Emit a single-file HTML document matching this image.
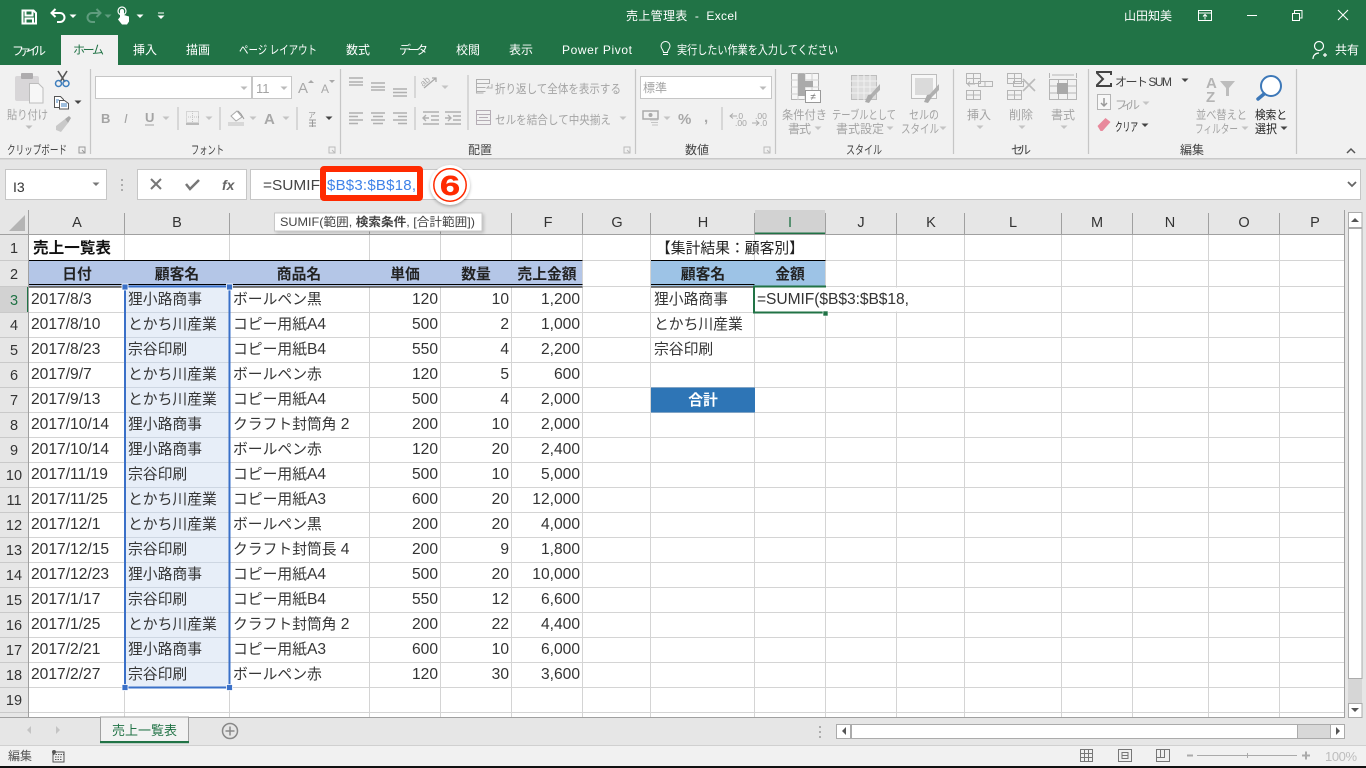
<!DOCTYPE html>
<html lang="ja"><head><meta charset="utf-8"><title>売上管理表 - Excel</title>
<style>
html,body{margin:0;padding:0;width:1366px;height:768px;overflow:hidden;background:#fff}
svg{display:block;position:absolute;left:0;top:0}
text{font-family:"Liberation Sans","Noto Sans CJK JP",sans-serif;white-space:pre}
.t{fill:#fff;font-size:12px}
.g{fill:#a4a4a4;font-size:12px}
.k{fill:#444;font-size:12px}
.c{fill:#363636;font-size:14.8px}
.n{fill:#333;font-size:15.6px}
.e{text-anchor:end}
.m{text-anchor:middle}
.b{font-weight:bold;font-size:14.8px;fill:#222;text-anchor:middle}
.h{fill:#333;font-size:14.5px;text-anchor:middle}
.ln{stroke:#b4b4b4;fill:none;stroke-width:1}
.lg{stroke:#b0b0b0;fill:none;stroke-width:1.4}
.sep{stroke:#c6c6c6;stroke-width:1.2}
</style></head><body>
<svg width="1366" height="768" viewBox="0 0 1366 768">
<defs>
<path id="ar" d="M-3.5 -1.5h7l-3.5 3.5z"/>
<filter id="sh" x="-30%" y="-30%" width="160%" height="160%"><feGaussianBlur stdDeviation="1.5"/></filter>
</defs>
<!-- title bar -->
<rect width="1366" height="65" fill="#217346"/>
<rect x="61" y="35" width="57" height="30" fill="#f1f1f1"/>
<!-- QAT -->
<path d="M22.5 10.5h11l2.5 2.5v10.5h-13.500zM25.500 11v4.500h7v-4.500M25.500 23.500v-5h7.500v5" fill="none" stroke="#fff" stroke-width="2"/>
<path d="M52 13h8a4.500 4.500 0 0 1 0 9h-3M55.500 9l-4 4 4 4" fill="none" stroke="#fff" stroke-width="2"/>
<use href="#ar" x="73" y="16" fill="#fff"/>
<path d="M100 13h-8a4.500 4.500 0 0 0 0 9h3M96.500 9l4 4-4 4" fill="none" stroke="#5f9c7e" stroke-width="2"/>
<use href="#ar" x="108" y="16" fill="#5f9c7e"/>
<path d="M120 17v-6a2 2 0 0 1 4 0v4l5 1.500v5l-2 3h-5l-4-5z" fill="#fff"/><circle cx="122" cy="11" r="4" fill="none" stroke="#fff" stroke-width="1.200"/>
<use href="#ar" x="140" y="16" fill="#fff"/>
<path d="M158 13h6" stroke="#fff"/><use href="#ar" x="161" y="17" fill="#fff"/>
<text class="t" x="626" y="20" font-size="12" textLength="111">売上管理表  -  Excel</text>
<text class="t" x="1124" y="20" textLength="48">山田知美</text>
<path d="M1198.500 10.500h13v10h-13zM1198.500 13h13M1205 19.500v-5M1203 16.500l2-2 2 2" fill="none" stroke="#fff"/>
<path d="M1247 15.500h10" stroke="#fff"/>
<path d="M1292.500 13.500h7v7h-7zM1294.500 13v-2.500h7.500v7.500h-2.500" fill="none" stroke="#fff"/>
<path d="M1338 10l10 10M1348 10l-10 10" stroke="#fff" stroke-width="1.100"/>
<!-- tabs -->
<text class="t" x="12" y="55" textLength="34">ファイル</text>
<text x="73" y="54" font-size="12" fill="#217346" textLength="31">ホーム</text>
<text class="t" x="133" y="54" textLength="24">挿入</text>
<text class="t" x="186" y="54" textLength="24">描画</text>
<text class="t" x="239" y="54" textLength="78" lengthAdjust="spacingAndGlyphs">ページ レイアウト</text>
<text class="t" x="346" y="54" textLength="24">数式</text>
<text class="t" x="399" y="54" textLength="29">データ</text>
<text class="t" x="456" y="54" textLength="24">校閲</text>
<text class="t" x="509" y="54" textLength="24">表示</text>
<text class="t" x="562" y="54" textLength="70">Power Pivot</text>
<path d="M663 54.500h5M663.500 52.500c0-3-2.500-3.500-2.500-6.500a4.500 4.500 0 0 1 9 0c0 3-2.500 3.500-2.500 6.500z" fill="none" stroke="#fff"/>
<text class="t" x="677" y="54" textLength="161" lengthAdjust="spacingAndGlyphs">実行したい作業を入力してください</text>
<circle cx="1319" cy="46" r="4.500" fill="none" stroke="#fff" stroke-width="1.200"/><path d="M1313 57c0-4 3-6 6-6M1323 53h4M1325 55v-4" transform="translate(0,2)" fill="none" stroke="#fff" stroke-width="1.200"/>
<text class="t" x="1335" y="54" textLength="24">共有</text>
<!-- ribbon -->
<rect y="65" width="1366" height="94" fill="#f1f1f1"/>
<rect y="158" width="1366" height="1.500" fill="#c9c9c9"/>
<g class="sep"><path d="M90.500 69v85M340.500 69v85M635.500 69v85M775.500 69v85M953.500 69v85M1088.500 69v85M1296.500 69v85"/><path d="M178 107v23M220 107v23M297 107v23M415 76v22M415 107v23M468 75v55M722 107v23"/></g>
<!-- clipboard -->
<rect x="15" y="76" width="24" height="25" rx="2" fill="#d8d6d8"/><rect x="21" y="73" width="12" height="6" rx="1" fill="#aeacae"/>
<path d="M29.500 83.500h9l4.500 4.500v15h-13.500z" fill="#f7f7f7" stroke="#bdbdbd"/>
<text class="g" x="7" y="119" font-size="13" textLength="41" lengthAdjust="spacingAndGlyphs">貼り付け</text>
<use href="#ar" x="29" y="127" fill="#bdbdbd"/>
<path d="M58 71l7 11M67 71l-7 11" stroke="#555" stroke-width="1.600"/><circle cx="58.500" cy="83.500" r="3" fill="none" stroke="#3f7fbd" stroke-width="1.500"/><circle cx="66" cy="83.500" r="3" fill="none" stroke="#3f7fbd" stroke-width="1.500"/>
<path d="M54.500 96.500h6l3 3v8h-9z" fill="#fff" stroke="#555"/><path d="M59.500 100.500h5l4 3v5.500h-9z" fill="#fff" stroke="#555"/><path d="M61 104h6M61 106h6" stroke="#3f7fbd"/><path d="M56 100h3M56 102h2" stroke="#3f7fbd"/>
<use href="#ar" x="78" y="102" fill="#444"/>
<path d="M56 126l9-7 3 4-7 9-5-2z" fill="#c9c9c9"/><path d="M65 119l4-3 2 2-3 5z" fill="#a9a9a9"/>
<text class="g" x="7" y="154" textLength="60" lengthAdjust="spacingAndGlyphs" style="fill:#444">クリップボード</text>
<path d="M79 147h6v6h-6zM82 150l3 3" fill="none" stroke="#999"/>
<!-- font -->
<rect x="95.500" y="76.500" width="156" height="22" fill="#fff" stroke="#c6c6c6"/><rect x="252.500" y="76.500" width="39" height="22" fill="#fff" stroke="#c6c6c6"/>
<use href="#ar" x="244" y="88" fill="#bbb"/><use href="#ar" x="284" y="88" fill="#bbb"/>
<text x="256" y="93" font-size="13" fill="#a4a4a4">11</text>
<text x="298" y="93" font-size="15" fill="#a8a8a8">A</text><path d="M308 83h6l-3-3z" fill="#a8a8a8"/>
<text x="321" y="93" font-size="12" fill="#a8a8a8">A</text><path d="M329 80h6l-3 3z" fill="#a8a8a8"/>
<text x="101" y="123" font-size="13" font-weight="bold" fill="#a4a4a4">B</text>
<text x="124" y="123" font-size="13" font-style="italic" font-family="Liberation Serif" fill="#a4a4a4">I</text>
<text x="145" y="122" font-size="13" font-weight="bold" fill="#a4a4a4">U</text><path d="M145 125h9" stroke="#a4a4a4"/>
<use href="#ar" x="166" y="118" fill="#c4c4c4"/>
<rect x="186.500" y="111.500" width="12" height="11" fill="none" stroke="#b9b9b9" stroke-dasharray="1 1"/><path d="M186 124h13" stroke="#a8a8a8" stroke-width="1.500"/><path d="M192.500 111v12M186 117h13" stroke="#c4c4c4" stroke-dasharray="1 1"/>
<use href="#ar" x="209" y="118" fill="#c4c4c4"/>
<path d="M231 116l6-5 5 6-6 4z" fill="#fff" stroke="#aaa"/><path d="M238 111l3 3 3 5" fill="none" stroke="#999"/><rect x="228" y="122" width="16" height="4" fill="#d8d8d8"/>
<use href="#ar" x="253" y="118" fill="#c4c4c4"/>
<text x="264" y="124" font-size="15" font-weight="bold" fill="#a8a8a8">A</text><use href="#ar" x="286" y="118" fill="#c4c4c4"/>
<text x="308" y="118" font-size="8" fill="#999">ア</text><path d="M309 120h7M309 123h7M309 126h7M312.500 120v7" stroke="#999"/>
<use href="#ar" x="329" y="118" fill="#444"/>
<text class="k" x="191" y="154" textLength="33" lengthAdjust="spacingAndGlyphs">フォント</text>
<path d="M329 147h6v6h-6zM332 150l3 3" fill="none" stroke="#bbb"/>
<!-- align -->
<g class="lg"><path d="M349 79h14M349 83h14M349 86h14" transform="translate(0,-1)"/><path d="M371 83h14M371 87h14M371 90h14" /><path d="M393 89h14M393 92.500h14M393 96h14"/>
<path d="M349 113h14M349 116.500h9M349 120h14M349 123.500h9"/><path d="M371 113h14M373 116.500h10M371 120h14M373 123.500h10"/><path d="M393 113h14M398 116.500h9M393 120h14M398 123.500h9"/>
<path d="M423 112h16M431 116h8M431 120h8M423 124h16M429 118h-6M426 115l-3 3 3 3"/><path d="M445 112h16M453 116h8M453 120h8M445 124h16M445 118h6M448 115l3 3-3 3"/></g>
<path d="M424 88l12-10M432 78h4v4" fill="none" stroke="#aaa" stroke-width="1.300"/><text x="423" y="87" font-size="9" fill="#aaa" transform="rotate(-40 423 87)">ab</text>
<use href="#ar" x="445" y="87" fill="#c4c4c4"/>
<path d="M476.500 79.500h13v4h-13zM476.500 87.500h9M476.500 91.500h9M476.500 79v14h7M492 84v4h-5l2-2" fill="none" stroke="#b0b0b0"/>
<text class="g" x="495" y="93" textLength="126" lengthAdjust="spacingAndGlyphs">折り返して全体を表示する</text>
<path d="M476.500 110.500h14v14h-14zM476.500 114.500h14M476.500 120.500h14M479 117.500h9" fill="none" stroke="#b5adb5"/>
<text class="g" x="495" y="124" textLength="116" lengthAdjust="spacingAndGlyphs">セルを結合して中央揃え</text>
<use href="#ar" x="623" y="118" fill="#c4c4c4"/>
<text class="k" x="468" y="154" textLength="24">配置</text>
<path d="M624 147h6v6h-6zM627 150l3 3" fill="none" stroke="#bbb"/>
<!-- number -->
<rect x="640.500" y="76.500" width="131" height="22" fill="#fff" stroke="#c6c6c6"/>
<text class="g" x="643" y="92" textLength="24">標準</text><use href="#ar" x="763" y="88" fill="#bbb"/>
<rect x="643" y="111" width="15" height="8" fill="none" stroke="#aaa" stroke-width="1.500"/><circle cx="650.500" cy="115" r="2" fill="#aaa"/><path d="M650 120h8M651 122.500h7M652 125h6" stroke="#c4c4c4"/>
<use href="#ar" x="667" y="118" fill="#c4c4c4"/>
<text x="678" y="124" font-size="15" font-weight="bold" fill="#a8a8a8">%</text>
<text x="704" y="122" font-size="15" font-weight="bold" fill="#a8a8a8">,</text>
<text x="736" y="119" font-size="8.500" fill="#a4a4a4">.0</text><text x="735" y="126" font-size="8.500" fill="#a4a4a4">.00</text><path d="M737 116h-7M733 113.500l-3 2.500 3 2.500" fill="none" stroke="#aaa"/>
<text x="755" y="119" font-size="8.500" fill="#a4a4a4">.00</text><text x="760" y="126" font-size="8.500" fill="#a4a4a4">.0</text><path d="M752 123h7M756 120.500l3 2.500-3 2.500" fill="none" stroke="#aaa"/>
<text class="k" x="685" y="154" textLength="24">数値</text>
<path d="M764 147h6v6h-6zM767 150l3 3" fill="none" stroke="#bbb"/>
<!-- styles -->
<rect x="791.500" y="73.500" width="27" height="26" fill="#f7f7f7" stroke="#b5b5b5"/><path d="M791 80h28M791 87h28M791 94h28M798 73v27M805 73v27M812 73v27" stroke="#cfcfcf"/><rect x="798" y="74" width="7" height="22" fill="#aaa"/><rect x="805" y="81" width="8" height="6" fill="#aaa"/>
<rect x="805.500" y="90.500" width="15" height="12" fill="#fff" stroke="#999"/><text x="813" y="100" font-size="10" fill="#777" class="m">≠</text>
<rect x="851.500" y="75.500" width="25" height="24" fill="#ddd" stroke="#bdbdbd"/><path d="M851 81h26M851 87h26M851 93h26M858 75v25M864 75v25M870 75v25" stroke="#f1f1f1"/>
<path d="M865 102l3-7 4-1 1 3-4 6z" fill="#aaa"/><path d="M871 94l9-10v6l-7 7z" fill="#b0b0b0"/>
<rect x="911.500" y="74.500" width="25" height="24" fill="#f7f7f7" stroke="#bdbdbd"/><rect x="915" y="78" width="18" height="17" fill="#dadada"/>
<path d="M924 102l3-7 4-1 1 3-4 6z" fill="#aaa"/><path d="M930 94l9-10v6l-7 7z" fill="#b0b0b0"/>
<text class="g" x="782" y="119" textLength="45" lengthAdjust="spacingAndGlyphs">条件付き</text><text class="g" x="788" y="133" textLength="23">書式</text><use href="#ar" x="818" y="128" fill="#c4c4c4"/>
<text class="g" x="832" y="119" textLength="64" lengthAdjust="spacingAndGlyphs">テーブルとして</text><text class="g" x="836" y="133" textLength="48">書式設定</text><use href="#ar" x="890" y="128" fill="#c4c4c4"/>
<text class="g" x="909" y="119" textLength="30" lengthAdjust="spacingAndGlyphs">セルの</text><text class="g" x="901" y="133" textLength="38" lengthAdjust="spacingAndGlyphs">スタイル</text><use href="#ar" x="943" y="128" fill="#c4c4c4"/>
<text class="k" x="846" y="154" textLength="36" lengthAdjust="spacingAndGlyphs">スタイル</text>
<!-- cells -->
<g fill="none" stroke="#b5b5b5">
<path d="M966.500 73.500h14v10h-14zM973.500 73.500v10M966.500 78.500h14M966.500 90.500h14v9h-14zM973.500 90v10M966.500 95h14"/>
<path d="M978.500 81.500h14v5h-14zM985 81.500v5M975 84h-7M970 81.500l-2.500 2.500 2.500 2.500"/>
<path d="M1007.500 73.500h14v10h-14zM1014.500 73.500v10M1007.500 78.500h14M1007.500 90.500h14v9h-14zM1014.500 90v10M1007.500 95h14M1013.500 81.500h10v5h-10z"/>
<path d="M1049.500 79.500h27v20h-27zM1058.500 79.500v20M1067.500 79.500v20M1049.500 86h27M1049.500 93h27M1049.500 73v5M1076.500 73v5M1052 75h22"/></g>
<path d="M1023 79l12 12M1035 79l-12 12" stroke="#bbb" stroke-width="1.600"/>
<rect x="1057" y="83" width="11" height="11" fill="#a8a8a8"/>
<text class="g" x="967" y="119" font-size="13" textLength="24">挿入</text><use href="#ar" x="980" y="127" fill="#c4c4c4"/>
<text class="g" x="1009" y="119" textLength="24">削除</text><use href="#ar" x="1022" y="127" fill="#c4c4c4"/>
<text class="g" x="1051" y="119" textLength="24">書式</text><use href="#ar" x="1064" y="127" fill="#c4c4c4"/>
<text class="k" x="1011" y="154" textLength="20">セル</text>
<!-- editing -->
<path d="M1111 75v-3h-14v1l6 6-6 6v1h14v-3" fill="none" stroke="#444" stroke-width="2"/>
<text class="k" x="1115" y="86" textLength="57">オート SUM</text><use href="#ar" x="1185" y="80" fill="#444"/>
<rect x="1097.500" y="94.500" width="13" height="15" fill="#f7f7f7" stroke="#b5b5b5"/><path d="M1104 98v8M1101 103l3 3 3-3" fill="none" stroke="#999" stroke-width="1.500"/>
<text class="g" x="1115" y="109" textLength="25">フィル</text><use href="#ar" x="1146" y="103" fill="#c4c4c4"/>
<path d="M1097.500 126l8-8 5 4-8 9h-2z" fill="#e8899c"/>
<text class="k" x="1115" y="131" textLength="23" lengthAdjust="spacingAndGlyphs" style="fill:#222">クリア</text><use href="#ar" x="1145" y="125" fill="#444"/>
<text x="1206" y="88" font-size="15" font-weight="bold" fill="#b4b4b4">A</text><text x="1206" y="102" font-size="15" font-weight="bold" fill="#b4b4b4">Z</text>
<path d="M1220 81h15l-6 7v8h-3v-8z" fill="#bdbdbd"/>
<text class="g" x="1196" y="119" textLength="51" lengthAdjust="spacingAndGlyphs">並べ替えと</text><text class="g" x="1195" y="133" textLength="43" lengthAdjust="spacingAndGlyphs">フィルター</text><use href="#ar" x="1245" y="128" fill="#c4c4c4"/>
<circle cx="1271" cy="86" r="10" fill="#fff" stroke="#3d78b8" stroke-width="2"/><path d="M1264 94l-6 5" stroke="#3d78b8" stroke-width="3.500" stroke-linecap="round"/>
<text x="1255" y="119" font-size="12" fill="#222" textLength="32" lengthAdjust="spacingAndGlyphs">検索と</text><text x="1255" y="133" font-size="12" fill="#222" textLength="22" lengthAdjust="spacingAndGlyphs">選択</text><use href="#ar" x="1284" y="128" fill="#444"/>
<text class="k" x="1180" y="154" textLength="24">編集</text>
<path d="M1347 153l4-4 4 4" fill="none" stroke="#555" stroke-width="1.500"/>
<!-- formula bar -->
<rect y="159.500" width="1366" height="51" fill="#e6e6e6"/>
<rect x="5.500" y="169.500" width="101" height="30" fill="#fff" stroke="#c6c6c6"/>
<text x="13" y="192" font-size="14" fill="#333">I3</text>
<use href="#ar" x="96" y="184" fill="#777"/>
<path d="M122 179v2M122 184v2M122 189v2" stroke="#999" stroke-width="1.500"/>
<rect x="137.500" y="169.500" width="109" height="30" fill="#fff" stroke="#c6c6c6"/>
<path d="M151 179l10 10M161 179l-10 10" stroke="#777" stroke-width="2"/>
<path d="M186 184l4 5 9-9" fill="none" stroke="#777" stroke-width="2.500"/>
<text x="222" y="190" font-size="14" font-style="italic" font-weight="bold" font-family="Liberation Serif" fill="#666">fx</text>
<rect x="250.500" y="169.500" width="1110" height="30" fill="#fff" stroke="#c6c6c6"/>
<text x="263" y="190" font-size="15" fill="#444" textLength="57" lengthAdjust="spacingAndGlyphs">=SUMIF</text>
<path d="M1348 182l4 4 4-4" fill="none" stroke="#666" stroke-width="1.800"/>
<rect x="323" y="169" width="97" height="29" rx="1" fill="#fff" stroke="#ff2a00" stroke-width="6"/>
<text x="327" y="190" font-size="15" fill="#3f82e8" textLength="89">$B$3:$B$18,</text>
<circle cx="450" cy="186.500" r="20" fill="#000" opacity=".28" filter="url(#sh)"/>
<circle cx="450" cy="185" r="20" fill="#fff"/>
<circle cx="450" cy="185" r="16.200" fill="#fff" stroke="#ff2a00" stroke-width="1.500"/>
<text transform="translate(450,195) scale(1.3,1)" font-size="28" font-weight="bold" fill="#ff2a00" stroke="#ff2a00" stroke-width=".4" class="m">6</text>
<!-- headers -->
<rect y="210" width="1346" height="24" fill="#e6e6e6"/>
<rect x="0" y="234" width="28" height="483" fill="#e6e6e6"/>
<rect x="29" y="235" width="1315" height="482" fill="#fff"/>
<path d="M25 215v16h-16z" fill="#b4b4b4"/>
<rect x="755" y="210" width="70" height="24" fill="#d2d2d2"/><rect x="754" y="232.500" width="72" height="2" fill="#217346"/>
<rect x="0" y="287" width="27" height="25" fill="#d2d2d2"/><rect x="27" y="287" width="2" height="25" fill="#217346"/>
<!-- header fills -->
<rect x="29" y="261" width="553" height="25" fill="#b4c6e7"/>
<rect x="651" y="261" width="175" height="25" fill="#9dc3e6"/>
<rect x="651" y="387.500" width="104" height="25" fill="#2e75b6"/>
<rect x="125" y="287" width="105" height="401" fill="#e7eef8"/>
<!-- grid -->
<g stroke="#d4d4d4" stroke-width="1" fill="none">
<path d="M124.500 235v26M229.500 235v26M369.500 235v26M440.500 235v26M511.500 235v26M582.500 235v482M650.500 235v482M754.500 235v26M825.500 235v482M896.500 235v482M964.500 235v482M1061.500 235v482M1132.500 235v482M1208.500 235v482M1279.500 235v482"/>
<path d="M124.500 287v430M229.500 287v430M369.500 287v430M440.500 287v430M511.500 287v430M754.500 287v430"/>
<path d="M29 260.500H1344M29 286.500H1344M29 312.500H1344M29 337.500H1344M29 362.500H1344M29 387.500H1344M29 412.500H1344M29 437.500H1344M29 462.500H1344M29 487.500H1344M29 512.500H1344M29 537.500H1344M29 562.500H1344M29 587.500H1344M29 612.500H1344M29 637.500H1344M29 662.500H1344M29 687.500H1344M29 712.500H1344"/>
</g>
<g stroke="#cdd6e2"><path d="M127 312.500h100M127 337.500h100M127 362.500h100M127 387.500h100M127 412.500h100M127 437.500h100M127 462.500h100M127 487.500h100M127 512.500h100M127 537.500h100M127 562.500h100M127 587.500h100M127 612.500h100M127 637.500h100M127 662.500h100"/></g>
<rect x="651" y="387.500" width="104" height="25" fill="#2e75b6"/>
<g stroke="#a0a0a0" fill="none"><path d="M0 234.500H1345M28.500 210V717M124.500 213v21M229.500 213v21M369.500 213v21M440.500 213v21M511.500 213v21M582.500 213v21M650.500 213v21M754.500 213v21M825.500 213v21M896.500 213v21M964.500 213v21M1061.500 213v21M1132.500 213v21M1208.500 213v21M1279.500 213v21M1344.500 210v507"/></g>
<g stroke="#c9c9c9"><path d="M0 260.500h28M0 286.500h28M0 312.500h28M0 337.500h28M0 362.500h28M0 387.500h28M0 412.500h28M0 437.500h28M0 462.500h28M0 487.500h28M0 512.500h28M0 537.500h28M0 562.500h28M0 587.500h28M0 612.500h28M0 637.500h28M0 662.500h28M0 687.500h28M0 712.500h28"/></g>
<!-- black borders -->
<g stroke="#000" fill="none"><path d="M29 260.500H582.500M651 260.500H825.500M29 284.500H582.500M29 287H582.500M651 284.500H754.500M651 287H754.500"/></g>
<!-- column letters -->
<text class="h" x="77" y="227">A</text><text class="h" x="177" y="227">B</text><text class="h" x="548" y="227">F</text><text class="h" x="617" y="227">G</text><text class="h" x="703" y="227">H</text><text class="h" x="790" y="227" style="fill:#217346">I</text><text class="h" x="861" y="227">J</text><text class="h" x="931" y="227">K</text><text class="h" x="1013" y="227">L</text><text class="h" x="1097" y="227">M</text><text class="h" x="1170" y="227">N</text><text class="h" x="1244" y="227">O</text><text class="h" x="1315" y="227">P</text>
<!-- row numbers -->
<g class="rn"><text class="h" x="14" y="253">1</text><text class="h" x="14" y="279">2</text><text class="h" x="14" y="305" style="fill:#217346">3</text><text class="h" x="14" y="330">4</text><text class="h" x="14" y="355">5</text><text class="h" x="14" y="380">6</text><text class="h" x="14" y="405">7</text><text class="h" x="14" y="430">8</text><text class="h" x="14" y="455">9</text><text class="h" x="14" y="480">10</text><text class="h" x="14" y="505">11</text><text class="h" x="14" y="530">12</text><text class="h" x="14" y="555">13</text><text class="h" x="14" y="580">14</text><text class="h" x="14" y="605">15</text><text class="h" x="14" y="630">16</text><text class="h" x="14" y="655">17</text><text class="h" x="14" y="680">18</text><text class="h" x="14" y="705">19</text></g>
<!-- titles -->
<text x="33" y="253" font-size="15.600" font-weight="bold" fill="#111">売上一覧表</text>
<text class="b" x="77" y="279">日付</text><text class="b" x="177" y="279">顧客名</text><text class="b" x="299" y="279">商品名</text><text class="b" x="405" y="279">単価</text><text class="b" x="476" y="279">数量</text><text class="b" x="547" y="279">売上金額</text>
<text class="b" x="703" y="279">顧客名</text><text class="b" x="790" y="279">金額</text>
<text class="b" x="703" y="405" style="fill:#fff">合計</text>
<text x="656" y="253" font-size="14.800" fill="#222">【集計結果：顧客別】</text>
<!-- A -->
<g class="n"><text x="31" y="304">2017/8/3</text><text x="31" y="329">2017/8/10</text><text x="31" y="354">2017/8/23</text><text x="31" y="379">2017/9/7</text><text x="31" y="404">2017/9/13</text><text x="31" y="429">2017/10/14</text><text x="31" y="454">2017/10/14</text><text x="31" y="479">2017/11/19</text><text x="31" y="504">2017/11/25</text><text x="31" y="529">2017/12/1</text><text x="31" y="554">2017/12/15</text><text x="31" y="579">2017/12/23</text><text x="31" y="604">2017/1/17</text><text x="31" y="629">2017/1/25</text><text x="31" y="654">2017/2/21</text><text x="31" y="679">2017/2/27</text></g>
<!-- B -->
<g class="c"><text x="128" y="304">狸小路商事</text><text x="128" y="329">とかち川産業</text><text x="128" y="354">宗谷印刷</text><text x="128" y="379">とかち川産業</text><text x="128" y="404">とかち川産業</text><text x="128" y="429">狸小路商事</text><text x="128" y="454">狸小路商事</text><text x="128" y="479">宗谷印刷</text><text x="128" y="504">とかち川産業</text><text x="128" y="529">とかち川産業</text><text x="128" y="554">宗谷印刷</text><text x="128" y="579">狸小路商事</text><text x="128" y="604">宗谷印刷</text><text x="128" y="629">とかち川産業</text><text x="128" y="654">狸小路商事</text><text x="128" y="679">宗谷印刷</text>
<!-- C -->
<text x="233" y="304">ボールペン黒</text><text x="233" y="329">コピー用紙<tspan font-size="15.600">A4</tspan></text><text x="233" y="354">コピー用紙<tspan font-size="15.600">B4</tspan></text><text x="233" y="379">ボールペン赤</text><text x="233" y="404">コピー用紙<tspan font-size="15.600">A4</tspan></text><text x="233" y="429">クラフト封筒角 <tspan font-size="15.600">2</tspan></text><text x="233" y="454">ボールペン赤</text><text x="233" y="479">コピー用紙<tspan font-size="15.600">A4</tspan></text><text x="233" y="504">コピー用紙<tspan font-size="15.600">A3</tspan></text><text x="233" y="529">ボールペン黒</text><text x="233" y="554">クラフト封筒長 <tspan font-size="15.600">4</tspan></text><text x="233" y="579">コピー用紙<tspan font-size="15.600">A4</tspan></text><text x="233" y="604">コピー用紙<tspan font-size="15.600">B4</tspan></text><text x="233" y="629">クラフト封筒角 <tspan font-size="15.600">2</tspan></text><text x="233" y="654">コピー用紙<tspan font-size="15.600">A3</tspan></text><text x="233" y="679">ボールペン赤</text>
<!-- H -->
<text x="654" y="304">狸小路商事</text><text x="654" y="329">とかち川産業</text><text x="654" y="354">宗谷印刷</text></g>
<!-- D E F -->
<g class="n e"><text x="438" y="304">120</text><text x="438" y="329">500</text><text x="438" y="354">550</text><text x="438" y="379">120</text><text x="438" y="404">500</text><text x="438" y="429">200</text><text x="438" y="454">120</text><text x="438" y="479">500</text><text x="438" y="504">600</text><text x="438" y="529">200</text><text x="438" y="554">200</text><text x="438" y="579">500</text><text x="438" y="604">550</text><text x="438" y="629">200</text><text x="438" y="654">600</text><text x="438" y="679">120</text>
<text x="509" y="304">10</text><text x="509" y="329">2</text><text x="509" y="354">4</text><text x="509" y="379">5</text><text x="509" y="404">4</text><text x="509" y="429">10</text><text x="509" y="454">20</text><text x="509" y="479">10</text><text x="509" y="504">20</text><text x="509" y="529">20</text><text x="509" y="554">9</text><text x="509" y="579">20</text><text x="509" y="604">12</text><text x="509" y="629">22</text><text x="509" y="654">10</text><text x="509" y="679">30</text>
<text x="580" y="304">1,200</text><text x="580" y="329">1,000</text><text x="580" y="354">2,200</text><text x="580" y="379">600</text><text x="580" y="404">2,000</text><text x="580" y="429">2,000</text><text x="580" y="454">2,400</text><text x="580" y="479">5,000</text><text x="580" y="504">12,000</text><text x="580" y="529">4,000</text><text x="580" y="554">1,800</text><text x="580" y="579">10,000</text><text x="580" y="604">6,600</text><text x="580" y="629">4,400</text><text x="580" y="654">6,000</text><text x="580" y="679">3,600</text></g>
<!-- active cell: overflowing formula text hides the right border -->
<rect x="755" y="287.500" width="157" height="24" fill="#fff"/>
<path d="M826 286.500H754V312.500H826" fill="none" stroke="#217346" stroke-width="2"/>
<rect x="823" y="311" width="5" height="5" fill="#217346" stroke="#fff" stroke-width=".6"/>
<text x="757" y="304" font-size="15.600" fill="#333" textLength="152">=SUMIF($B$3:$B$18,</text>
<!-- B selection -->
<rect x="125" y="286.500" width="104.500" height="401" fill="none" stroke="#3a70c8" stroke-width="2"/>
<g fill="#3a70c8" stroke="#fff" stroke-width=".8"><rect x="122" y="284" width="6" height="6"/><rect x="226.500" y="284" width="6" height="6"/><rect x="122" y="684.500" width="6" height="6"/><rect x="226.500" y="684.500" width="6" height="6"/></g>
<!-- tooltip -->
<rect x="276" y="214" width="208" height="19" fill="#000" opacity=".18" filter="url(#sh)"/>
<rect x="274.500" y="213" width="207.500" height="18" fill="#fff" stroke="#c8c8c8"/>
<text x="280" y="226" font-size="12" fill="#444" textLength="195" lengthAdjust="spacingAndGlyphs">SUMIF(範囲, <tspan font-weight="bold">検索条件</tspan>, [合計範囲])</text>
<!-- scrollbars -->
<rect x="1345" y="210" width="21" height="537" fill="#e6e6e6"/>
<rect x="1348" y="212" width="14" height="505" fill="#d6d6d6"/>
<rect x="1348.500" y="212.500" width="13.500" height="15" fill="#fff" stroke="#ababab"/><path d="M1351 222h8l-4-4z" fill="#555"/>
<rect x="1348.500" y="228.500" width="13.500" height="450" fill="#fff" stroke="#ababab"/>
<rect x="1348.500" y="703.500" width="13.500" height="14" fill="#fff" stroke="#ababab"/><path d="M1351 708h8l-4 4z" fill="#555"/>
<!-- sheet bar -->
<rect y="717" width="1346" height="29" fill="#e6e6e6"/><path d="M0 717.500H1345" stroke="#a0a0a0"/>
<path d="M100.500 743v-26h88v26" fill="#f2f2f2" stroke="#a0a0a0"/><rect x="100" y="741" width="89" height="2.200" fill="#217346"/>
<text x="112" y="735" font-size="13" fill="#217346" textLength="65">売上一覧表</text>
<path d="M31 726l-4 4 4 4zM56 726l4 4-4 4z" fill="#c4c4c4"/>
<circle cx="230" cy="731" r="7.500" fill="none" stroke="#888" stroke-width="1.500"/><path d="M230 726.500v9M225.500 731h9" stroke="#888" stroke-width="1.500"/>
<path d="M820 726v2M820 731v2M820 736v2" stroke="#999" stroke-width="1.500"/>
<rect x="836.500" y="724.500" width="508" height="14" fill="#d8d8d8" stroke="#ababab"/>
<rect x="836.500" y="724.500" width="14" height="14" fill="#fff" stroke="#ababab"/><path d="M846 727v8l-4-4z" fill="#555"/>
<rect x="851.500" y="724.500" width="446" height="14" fill="#fff" stroke="#ababab"/>
<rect x="1330.500" y="724.500" width="14" height="14" fill="#fff" stroke="#ababab"/><path d="M1336 727v8l4-4z" fill="#555"/>
<!-- status -->
<rect y="746" width="1366" height="20" fill="#f1f1f1"/><path d="M0 745.500H1366" stroke="#d0d0d0"/>
<rect y="766" width="1366" height="2" fill="#111"/>
<text x="8" y="760" font-size="12" fill="#555" textLength="24">編集</text>
<rect x="53" y="752" width="11" height="10" fill="none" stroke="#555"/><path d="M53 754.500h11M55 757h7M55 759.500h7" stroke="#555" stroke-dasharray="1.500 1"/><circle cx="54" cy="752" r="2" fill="#555"/>
<path d="M1080.500 749.500h12v12h-12zM1084.500 749.500v12M1088.500 749.500v12M1080.500 753.500h12M1080.500 757.500h12" fill="none" stroke="#777"/>
<path d="M1118.500 749.500h13v12h-13zM1122 752.500h6v6h-6zM1122 755.500h6" fill="none" stroke="#777"/>
<path d="M1156.500 749.500h13v12h-13zM1156.500 757.500h8v-8M1160.500 749.500v8" fill="none" stroke="#777"/>
<path d="M1187 755.500h6M1302 755.500h8M1306 751.500v8" stroke="#aaa" stroke-width="2"/>
<path d="M1197 755.500h100M1247.500 753v5" stroke="#aaa"/>
<text x="1325" y="761" font-size="13" fill="#bdbdbd" textLength="32">100%</text>
</svg>
</body></html>
